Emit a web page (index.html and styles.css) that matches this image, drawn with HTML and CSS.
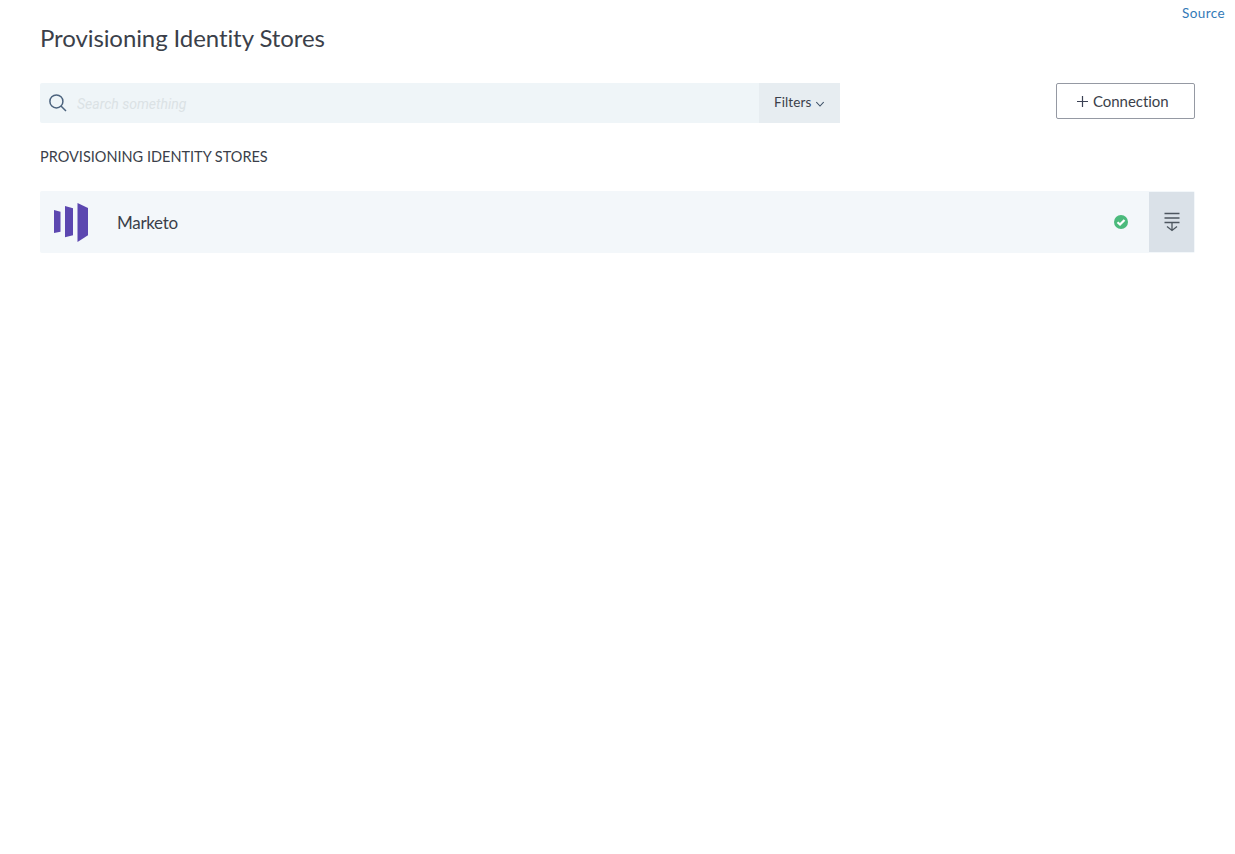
FILE: index.html
```html
<!DOCTYPE html>
<html lang="en">
<head>
<meta charset="utf-8">
<title>Provisioning Identity Stores</title>
<link rel="stylesheet" href="styles.css">
</head>
<body>
<header class="topbar">
  <h1 class="title">Provisioning Identity Stores</h1>
  <a class="source" href="#">Source</a>
</header>
<main class="content">
  <div class="toolbar">
    <div class="search">
      <svg class="search-icon" width="18" height="18" viewBox="0 0 18 18" fill="none" stroke="#4c637e" stroke-width="1.5"><circle cx="7.4" cy="7.400" r="6.500"/><path d="M12 12l5 5"/></svg>
      <input class="search-input" type="text" placeholder="Search something">
      <button class="filters"><span>Filters</span><svg width="8" height="6" viewBox="0 0 8 6" fill="none" stroke="#3f5268" stroke-width="1.100"><path d="M.3 1L4 5 7.700 1"/></svg></button>
    </div>
    <button class="connect"><svg width="11" height="11" viewBox="0 0 11 11" stroke="#3b4154" stroke-width="1.200"><path d="M5.500 0v11M0 5.500h11"/></svg><span>Connection</span></button>
  </div>
  <h2 class="section">PROVISIONING IDENTITY STORES</h2>
  <div class="row">
    <svg class="logo" width="36" height="40" viewBox="0 0 36 40" fill="#5c47b0"><path d="M1 8l6.500 1.700v20L1 31z"/><path d="M12 4l8 2.200v27L12 35.300z"/><path d="M24.500 1L35 6v27.300L24.500 40z"/></svg>
    <span class="name">Marketo</span>
    <svg class="status" width="14" height="14" viewBox="0 0 14 14"><circle cx="7" cy="7" r="7" fill="#4bba7c"/><path d="M3.500 7.200l2.500 2.300 4.500-4.600" fill="none" stroke="#fff" stroke-width="2.200"/></svg>
    <button class="expand" aria-label="Expand"><svg width="16" height="20" viewBox="0 0 16 20" fill="none" stroke="#4d565f" stroke-width="1.300"><path d="M.500 1.500h15M.500 6h15M.500 10.500h15M8 10.500v8M3 14.500l5 4 5-4"/></svg></button>
  </div>
</main>
</body>
</html>
```
FILE: styles.css
```css
* { box-sizing: border-box; }
body { margin: 0; background: #fff; color: #3b3f4a; font-family: Lato, "Liberation Sans", sans-serif; font-variant-ligatures: none; }
button { border: 0; padding: 0; font-family: inherit; color: inherit; font-variant-ligatures: none; }
.topbar { display: flex; justify-content: space-between; align-items: flex-start; height: 83px; padding: 4px 10px 0 40px; }
.title { margin: 18px 0 0; font-size: 24px; line-height: 31px; font-weight: 400; letter-spacing: -.09px; white-space: nowrap; }
.source { font-size: 13.500px; line-height: 18px; letter-spacing: .4px; color: #337ab7; text-decoration: none; }
.content { padding: 0 40px; }
.toolbar { display: flex; justify-content: space-between; align-items: flex-start; height: 40px; }
.search { display: flex; align-items: center; width: 800px; height: 40px; padding-left: 9px; background: #eff5f8; border-radius: 2px; }
.search-input { flex: 1; min-width: 0; margin-left: 10px; padding: 1px 0 0; border: 0; outline: 0; background: transparent; font: italic 14px Roboto, "Liberation Sans", sans-serif; }
.search-input::placeholder { color: #dbe2e5; opacity: 1; }
.filters { display: flex; align-items: center; gap: 5px; width: 81px; height: 40px; padding: 0 0 3px 15px; background: #e7edf1; font-size: 13.500px; letter-spacing: .1px; }
.filters svg { margin-top: 5px; }
.connect { display: flex; align-items: center; gap: 5px; width: 139px; height: 36px; padding-left: 20px; border: 1px solid #9599a3; border-radius: 2px; background: #fff; font-size: 15px; letter-spacing: -.05px; }
.section { margin: 24px 0 0; height: 44px; font-size: 14.500px; line-height: 20px; font-weight: 400; white-space: nowrap; }
.row { display: flex; align-items: center; height: 62px; padding: 0 1px 0 13px; background: #f3f7fa; border-radius: 2px; }
.name { margin-left: 28px; padding-top: 2px; font-size: 17px; line-height: 22px; letter-spacing: -.3px; }
.status { margin-left: auto; margin-right: 21px; }
.expand { display: flex; align-items: center; justify-content: center; width: 45px; height: 60px; background: #dae1e8; }
```
